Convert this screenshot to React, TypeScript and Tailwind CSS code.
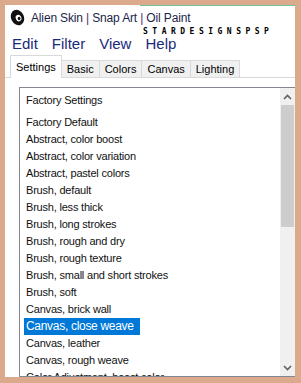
import React from "react";

const items = [
  "Factory Default",
  "Abstract, color boost",
  "Abstract, color variation",
  "Abstract, pastel colors",
  "Brush, default",
  "Brush, less thick",
  "Brush, long strokes",
  "Brush, rough and dry",
  "Brush, rough texture",
  "Brush, small and short strokes",
  "Brush, soft",
  "Canvas, brick wall",
  "Canvas, close weave",
  "Canvas, leather",
  "Canvas, rough weave",
  "Color Adjustment, boost color",
];

const tabs = ["Settings", "Basic", "Colors", "Canvas", "Lighting"];

export default function App() {
  return (
    <div className="w-[301px] h-[383px] bg-[#dba98c] pt-[5px] pl-[5px] pr-[6px] pb-[6px] overflow-hidden">
      <div className="relative h-full bg-white flex flex-col overflow-hidden" style={{ fontFamily: "'Liberation Sans', Arial, sans-serif" }}>
        <div className="absolute top-0 left-[135px] right-0 h-[1px] bg-[#6fc59a]" />
        {/* title */}
        <div className="h-[25px] flex items-center pl-[5px] shrink-0">
          <svg width="15" height="17" viewBox="0 0 14 16" className="mr-[6px]">
            <ellipse cx="7" cy="8" rx="6" ry="7.5" fill="#111" transform="rotate(-25 7 8)" />
            <ellipse cx="8" cy="8.5" rx="2.6" ry="3.2" fill="#fff" transform="rotate(-25 8 8.5)" />
            <ellipse cx="8.5" cy="9" rx="1.3" ry="1.7" fill="#111" />
          </svg>
          <span className="text-[12px] tracking-[-0.15px] text-[#1b1f4a]">
            Alien Skin <span className="text-[#5a2a6e]">|</span> Snap Art <span className="text-[#5a2a6e]">|</span> Oil Paint
          </span>
        </div>
        <div className="absolute left-[138px] top-[23px] text-[8px] leading-[8px] font-bold tracking-[4.5px] text-black" style={{ fontFamily: "'DejaVu Sans Mono', monospace" }}>
          STARDESIGNSPSP
        </div>
        {/* menu */}
        <div className="h-[25px] flex items-center pl-[7px] gap-[14px] text-[15px] text-[#1a2a7a] shrink-0 pt-[3px]">
          <span>Edit</span>
          <span>Filter</span>
          <span>View</span>
          <span>Help</span>
        </div>
        {/* tabs */}
        <div className="h-[23px] shrink-0 flex items-end pl-[5px] bg-white relative">
          <div className="absolute left-0 right-0 bottom-0 h-[1px] bg-[#d9d9d9]" />
          {tabs.map((t, i) =>
            i === 0 ? (
              <div key={t} className="relative z-10 h-[23px] px-[5px] flex items-center bg-white border border-b-0 border-[#d9d9d9] text-[11px] text-black">
                {t}
              </div>
            ) : (
              <div key={t} className="h-[18px] px-[5px] flex items-center bg-[#f0f0f0] border border-l-0 border-[#d9d9d9] text-[11px] text-black">
                {t}
              </div>
            )
          )}
        </div>
        {/* panel */}
        <div className="flex-1 flex flex-col pt-[9px] pl-[14px] min-h-0">
          <div className="flex-1 flex border-t border-l border-b border-[#828790] min-h-0">
            <div className="flex-1 pt-[4px] overflow-hidden text-[11px] tracking-[-0.2px] text-[#111] leading-[17px]">
              <div className="h-[17px] pl-[6px]">Factory Settings</div>
              <div className="mt-[5px]">
                {items.map((it) =>
                  it === "Canvas, close weave" ? (
                    <div key={it} className="h-[17px] pl-[4px]">
                      <span className="inline-block h-[17px] bg-[#0078d7] text-white pl-[2px] pr-[6px] text-[12px] tracking-[-0.3px]">{it}</span>
                    </div>
                  ) : (
                    <div key={it} className="h-[17px] pl-[6px] whitespace-nowrap">{it}</div>
                  )
                )}
              </div>
            </div>
            <div className="w-[15px] shrink-0 flex flex-col bg-[#f0f0f0]">
              <div className="h-[17px] flex items-center justify-center">
                <svg width="9" height="6" viewBox="0 0 9 6"><path d="M1 5 L4.5 1.5 L8 5" stroke="#606060" strokeWidth="1.6" fill="none" /></svg>
              </div>
              <div className="h-[122px] bg-[#cdcdcd] mx-[1px]" />
              <div className="flex-1" />
              <div className="h-[17px] flex items-center justify-center">
                <svg width="9" height="6" viewBox="0 0 9 6"><path d="M1 1 L4.5 4.5 L8 1" stroke="#606060" strokeWidth="1.6" fill="none" /></svg>
              </div>
            </div>
          </div>
        </div>
      </div>
    </div>
  );
}
